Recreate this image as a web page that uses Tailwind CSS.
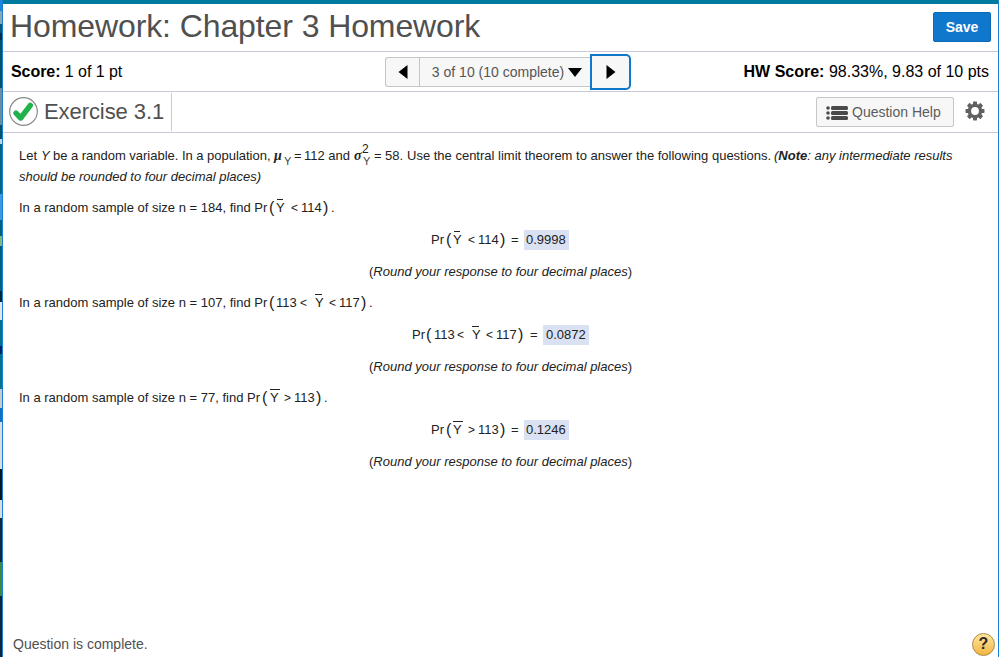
<!DOCTYPE html>
<html lang="en">
<head>
<meta charset="utf-8">
<title>Homework: Chapter 3 Homework</title>
<script src="https://cdn.jsdelivr.net/npm/@tailwindcss/browser@4"></script>
</head>
<body class="flex h-[657px] w-[999px] overflow-hidden bg-white font-['Liberation_Sans',Arial,sans-serif] text-[#222]">
  <!-- Sliver of the desktop behind the window -->
  <div class="flex w-[2px] shrink-0 flex-col">
    <div class="h-[11px] bg-[#1a86dc]"></div>
    <div class="h-[13px] bg-[#8fa6b4]"></div>
    <div class="h-[9px] bg-[#07597a]"></div>
    <div class="h-[7px] bg-[#0a2f45]"></div>
    <div class="h-[48px] bg-[#07546a]"></div>
    <div class="h-[37px] bg-[#6f8d99]"></div>
    <div class="h-[14px] bg-[#07546a]"></div>
    <div class="h-[5px] bg-[#c5d3da]"></div>
    <div class="h-[50px] bg-[#066783]"></div>
    <div class="h-[26px] bg-[#3b9be0]"></div>
    <div class="h-[16px] bg-[#06607a]"></div>
    <div class="h-[10px] bg-[#86b77a]"></div>
    <div class="h-[45px] bg-[#06607a]"></div>
    <div class="h-[11px] bg-[#0a2633]"></div>
    <div class="h-[18px] bg-[#e2e4e6]"></div>
    <div class="h-[26px] bg-[#05728a]"></div>
    <div class="h-[8px] bg-[#08206a]"></div>
    <div class="h-[35px] bg-[#067488]"></div>
    <div class="h-[19px] bg-[#c9cbcd]"></div>
    <div class="h-[14px] bg-[#0b72c4]"></div>
    <div class="h-[47px] bg-[#dcdcde]"></div>
    <div class="h-[31px] bg-[#0c1722]"></div>
    <div class="h-[18px] bg-[#dcdcdc]"></div>
    <div class="h-[44px] bg-[#16283a]"></div>
    <div class="h-[34px] bg-[#3d8a3c]"></div>
    <div class="grow bg-[#142536]"></div>
  </div>

  <div class="relative flex w-[997px] flex-col border-x border-[#1a7fd4]">
    <div class="h-[4px] shrink-0 bg-[#007a9f]"></div>
    <header class="flex h-[48px] shrink-0 items-start justify-between border-b border-[#c7cad6] pr-[7px] pl-[7px]">
      <h1 class="pt-[4px] text-[32px] leading-[37px] tracking-[-0.1px] whitespace-nowrap text-[#505050]">Homework: Chapter 3 Homework</h1>
      <button class="mt-[8px] h-[30px] w-[58px] rounded-[2px] border border-[#0b69b5] bg-[#0f78cd] text-[14px] leading-[28px] font-bold tracking-[-0.1px] text-white">Save</button>
    </header>

    <div class="flex h-[40px] shrink-0 items-center border-b border-[#c7cad6] pr-[9px] pl-[8px] text-[16px] whitespace-nowrap text-black">
      <div class="w-[374px] tracking-[-0.06px]"><b>Score:</b> 1 of 1 pt</div>
      <div class="flex w-[246px] items-center">
        <button class="flex h-[30px] w-[34px] items-center justify-center rounded-l-[3px] border border-r-0 border-[#c6c6c6] bg-[#f7f7f7]"><svg class="mt-[1px] ml-[1px]" width="10" height="14" viewBox="0 0 10 14"><path d="M9.500 0v14L.5 7z"/></svg></button>
        <button class="flex h-[30px] w-[173px] items-center border border-r-0 border-[#c6c6c6] bg-[#f7f7f7] pt-[1px] pl-[12px] text-[14px] text-[#555]">3 of 10 (10 complete)<svg class="mt-[1px] ml-[4px] shrink-0" width="14" height="9" viewBox="0 0 14 9"><path fill="#000" d="M0 0h14L7 9z"/></svg></button>
        <button class="-ml-[1px] flex h-[36px] w-[41px] items-center justify-center rounded-r-[5px] border-[2.500px] border-[#0f78cd] bg-[#f7f7f7]"><svg class="mt-[1px]" width="10" height="14" viewBox="0 0 10 14"><path d="M.5 0v14l9-7z"/></svg></button>
      </div>
      <div class="grow text-right"><b>HW Score:</b> 98.33%, 9.83 of 10 pts</div>
    </div>

    <div class="flex h-[41px] shrink-0 items-center border-b border-[#c7cad6] pr-[13px] pl-[6px]">
      <div class="flex h-[38px] w-[163px] items-center border-r border-[#c7cad6]">
        <svg class="-mt-[1px] shrink-0" width="29" height="29" viewBox="0 0 29 29"><circle cx="14.500" cy="14.500" r="13.800" fill="#fff" stroke="#8b8b8b" stroke-width="1.200"/><path d="M7 16.200l4.700 4.800L21.300 8.300" fill="none" stroke="#22b24c" stroke-width="5.400" stroke-linecap="round" stroke-linejoin="round"/></svg>
        <h2 class="ml-[6px] text-[22px] leading-[26px] tracking-[-0.08px] whitespace-nowrap text-[#505050]">Exercise 3.1</h2>
      </div>
      <button class="ml-auto flex h-[30px] w-[138px] items-center rounded-[2px] border border-[#c6c6c6] bg-[#f7f7f7] pl-[9px] text-[14px] whitespace-nowrap text-[#5c5c5c]">
        <svg class="mt-[1px] mr-[4px] shrink-0" width="22" height="14" viewBox="0 0 22 14" fill="#4a4a4a"><circle cx="2" cy="2" r="1.800"/><circle cx="2" cy="7" r="1.800"/><circle cx="2" cy="12" r="1.800"/><rect x="5" width="17" height="4" rx="1.500"/><rect x="5" y="5" width="17" height="4" rx="1.500"/><rect x="5" y="10" width="17" height="4" rx="1.500"/></svg>Question Help</button>
      <svg class="-mt-[2px] ml-[11px] shrink-0" width="20" height="20" viewBox="-10 -10 20 20" fill="#606060"><rect x="-2" y="-9.500" width="4" height="19" rx=".7"/><rect x="-2" y="-9.500" width="4" height="19" rx=".7" transform="rotate(45)"/><rect x="-2" y="-9.500" width="4" height="19" rx=".7" transform="rotate(90)"/><rect x="-2" y="-9.500" width="4" height="19" rx=".7" transform="rotate(135)"/><circle r="7.300"/><circle r="3.900" fill="#fff"/></svg>
    </div>

    <main class="flex grow flex-col pl-[16px] text-[13px] leading-[20px] whitespace-pre">
      <div class="mt-[13px] flex h-[20px]">
        <span class="w-[22px]">Let</span><i class="w-[12px]">Y</i><span class="w-[221px] tracking-[-0.02px]">be a random variable. In a population,</span><i class="w-[10px] font-['Liberation_Serif',serif] text-[14px] font-bold">μ</i><span class="w-[10px] pt-[5px] text-[11px] text-[#444]">Y</span><span class="w-[10px]">=</span><span class="w-[50px]">112 and</span><i class="w-[8px] font-['Liberation_Serif',serif] text-[14px] font-bold">σ</i><span class="flex w-[12px] flex-col text-[12px] leading-[11px]"><span class="-mt-[2px]">2</span><span class="mt-[1px] pl-[1px] text-[11px] text-[#444]">Y</span></span><span class="w-[11px]">=</span><span class="w-[22px]">58.</span><span class="w-[367px]">Use the central limit theorem to answer the following questions.</span><i>(<b>Note</b>: any intermediate results</i>
      </div>
      <i class="mt-[1px] h-[20px]">should be rounded to four decimal places)</i>

      <div class="mt-[11px] flex h-[20px]"><span class="w-[250px]">In a random sample of size n = 184, find Pr</span><span class="w-[7px] text-[16px]">(</span><span class="relative w-[15px]">Y<span class="absolute top-[1px] left-[1px] h-px w-[6px] bg-[#222]"></span></span><span class="w-[10px] text-[12px]">&lt;</span><span class="w-[22px]">114</span><span class="w-[8px] text-[16px]">)</span><span>.</span></div>
      <div class="mt-[12px] ml-[412px] flex h-[20px]"><span class="w-[15px]">Pr</span><span class="w-[7px] text-[16px]">(</span><span class="relative w-[15px]">Y<span class="absolute top-[1px] left-[1px] h-px w-[6px] bg-[#222]"></span></span><span class="w-[10px] text-[12px]">&lt;</span><span class="w-[22px]">114</span><span class="w-[11px] text-[16px]">)</span><span class="w-[13px]">=</span><span class="w-[45px] bg-[#d9e1f2] pl-[2px]">0.9998</span></div>
      <div class="mt-[12px] ml-[350px] h-[20px]">(<i>Round your response to four decimal places</i>)</div>

      <div class="mt-[11px] flex h-[20px]"><span class="w-[250px]">In a random sample of size n = 107, find Pr</span><span class="w-[7px] text-[16px]">(</span><span class="w-[24px]">113</span><span class="w-[15px] text-[12px]">&lt;</span><span class="relative w-[14px]">Y<span class="absolute top-[1px] left-0 h-px w-[7px] bg-[#222]"></span></span><span class="w-[10px] text-[12px]">&lt;</span><span class="w-[22px]">117</span><span class="w-[8px] text-[16px]">)</span><span>.</span></div>
      <div class="mt-[12px] ml-[393px] flex h-[20px]"><span class="w-[14px]">Pr</span><span class="w-[8px] text-[16px]">(</span><span class="w-[23px]">113</span><span class="w-[15px] text-[12px]">&lt;</span><span class="relative w-[14px]">Y<span class="absolute top-[1px] left-0 h-px w-[7px] bg-[#222]"></span></span><span class="w-[10px] text-[12px]">&lt;</span><span class="w-[22px]">117</span><span class="w-[12px] text-[16px]">)</span><span class="w-[13px]">=</span><span class="w-[46px] bg-[#d9e1f2] pl-[3px]">0.0872</span></div>
      <div class="mt-[12px] ml-[350px] h-[20px]">(<i>Round your response to four decimal places</i>)</div>

      <div class="mt-[11px] flex h-[20px]"><span class="w-[243px]">In a random sample of size n = 77, find Pr</span><span class="w-[8px] text-[16px]">(</span><span class="relative w-[14px]">Y<span class="absolute top-[1px] left-0 h-px w-[10px] bg-[#222]"></span></span><span class="w-[10px] text-[12px]">&gt;</span><span class="w-[22px]">113</span><span class="w-[8px] text-[16px]">)</span><span>.</span></div>
      <div class="mt-[12px] ml-[412px] flex h-[20px]"><span class="w-[15px]">Pr</span><span class="w-[7px] text-[16px]">(</span><span class="relative w-[15px]">Y<span class="absolute top-[1px] left-0 h-px w-[10px] bg-[#222]"></span></span><span class="w-[10px] text-[12px]">&gt;</span><span class="w-[22px]">113</span><span class="w-[11px] text-[16px]">)</span><span class="w-[13px]">=</span><span class="w-[45px] bg-[#d9e1f2] pl-[2px]">0.1246</span></div>
      <div class="mt-[12px] ml-[350px] h-[20px]">(<i>Round your response to four decimal places</i>)</div>
    </main>

    <footer class="flex h-[26px] shrink-0 items-center justify-between pr-[3px] pl-[10px] text-[14px] text-[#505050]">
      <span>Question is complete.</span>
      <span class="flex size-[23px] items-center justify-center rounded-full border border-[#a8884a] bg-linear-to-b from-[#ffe89a] to-[#f3b43c] text-[16px] font-bold text-[#2b2b2b]">?</span>
    </footer>
  </div>
</body>
</html>
